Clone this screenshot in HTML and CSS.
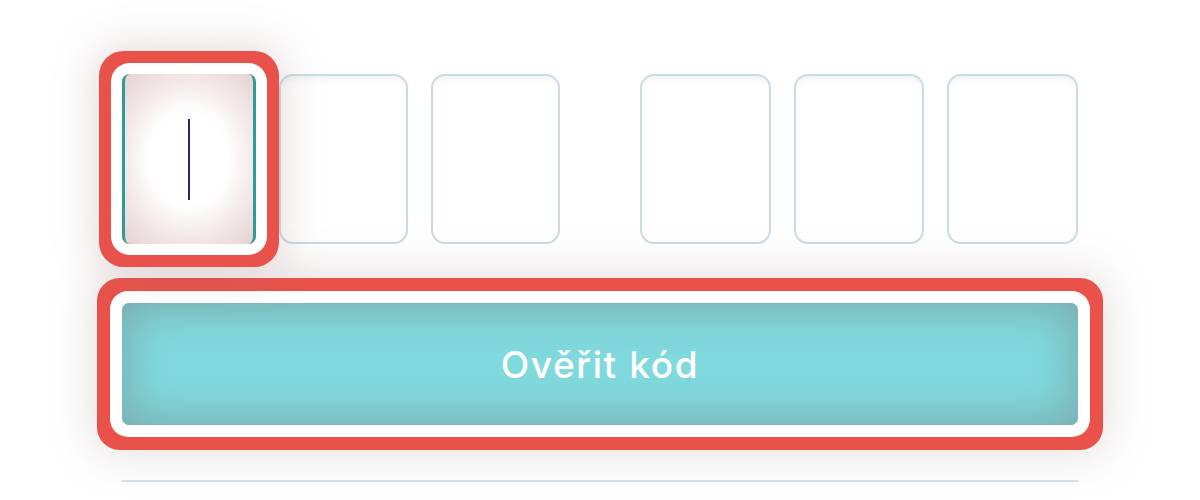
FILE: index.html
```html
<!DOCTYPE html>
<html lang="cs">
<head>
<meta charset="utf-8">
<title>Ověřit kód</title>
<link rel="stylesheet" href="styles.css">
</head>
<body>
<main class="page">
  <div class="otp">
    <div class="otp-group">
      <div class="digit digit-focused"><span class="caret"></span></div>
      <div class="digit"></div>
      <div class="digit"></div>
    </div>
    <div class="otp-group">
      <div class="digit"></div>
      <div class="digit"></div>
      <div class="digit"></div>
    </div>
  </div>
  <button class="verify" type="button">Ověřit kód</button>
  <hr class="divider">
</main>
</body>
</html>
```

FILE: styles.css
```css
html, body {
  margin: 0;
  padding: 0;
  background: #ffffff;
  width: 1200px;
  height: 500px;
  overflow: hidden;
}

.page {
  padding: 74px 122px 0 122px;
  font-family: "Inter", "Noto Sans", sans-serif;
}

.otp {
  display: flex;
  gap: 80px;
  height: 170px;
}

.otp-group {
  flex: 1;
  display: flex;
  gap: 23px;
}

.digit {
  flex: 1;
  box-sizing: border-box;
  border: 2px solid #c8dde0;
  border-radius: 14px;
  background: #ffffff;
  box-shadow: inset 0 10px 10px -8px rgba(0, 0, 0, 0.07);
}

.digit-focused {
  flex: 0 0 134px;
  position: relative;
  z-index: 2;
  display: flex;
  align-items: center;
  justify-content: center;
  border-width: 0 3px;
  border-color: #2c9c97;
  border-radius: 8px;
  background: radial-gradient(ellipse 80% 72% at 50% 50%, #ffffff 38%, #f4eaea 62%, #e2cccc 100%);
  box-shadow:
    0 0 0 11px #ffffff,
    0 0 0 23px #e8524a,
    0 0 44px 28px rgba(150, 110, 110, 0.24);
}

.caret {
  display: block;
  width: 2px;
  height: 81px;
  margin-top: 0;
  background: #1f2d62;
}

.verify {
  position: relative;
  z-index: 1;
  display: block;
  width: 100%;
  height: 122px;
  margin-top: 59px;
  padding: 0;
  border: none;
  border-radius: 7px;
  background: #80d9dd;
  color: #ffffff;
  font-family: "Inter", "Noto Sans", sans-serif;
  font-size: 37px;
  font-weight: 500;
  letter-spacing: 1.6px;
  box-shadow:
    inset 0 0 40px 8px #7aaeb0,
    0 0 0 12px #ffffff,
    0 0 0 25px #e8524a,
    0 0 44px 30px rgba(140, 110, 110, 0.22);
}

.divider {
  margin: 55px 0 0 0;
  border: none;
  height: 2px;
  background: #d3e3ea;
}
```
